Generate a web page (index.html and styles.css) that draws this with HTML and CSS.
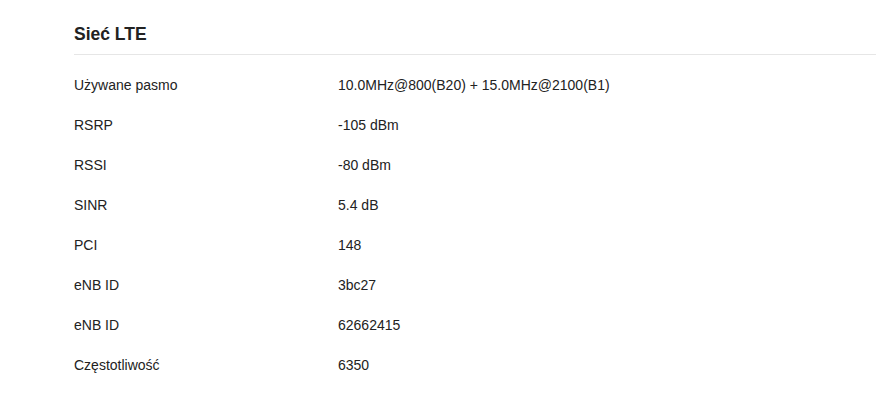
FILE: index.html
```html
<!DOCTYPE html>
<html lang="pl">
<head>
<meta charset="UTF-8">
<meta name="viewport" content="width=device-width, initial-scale=1.0">
<title>Sieć LTE</title>
<link rel="stylesheet" href="styles.css">
</head>
<body>

<div class="section">
    <h2 class="section-title">Sieć LTE</h2>
    <div class="info-list">
        <div class="info-row"><span class="info-label">Używane pasmo</span><span class="info-value">10.0MHz@800(B20) + 15.0MHz@2100(B1)</span></div>
        <div class="info-row"><span class="info-label">RSRP</span><span class="info-value">-105 dBm</span></div>
        <div class="info-row"><span class="info-label">RSSI</span><span class="info-value">-80 dBm</span></div>
        <div class="info-row"><span class="info-label">SINR</span><span class="info-value">5.4 dB</span></div>
        <div class="info-row"><span class="info-label">PCI</span><span class="info-value">148</span></div>
        <div class="info-row"><span class="info-label">eNB ID</span><span class="info-value">3bc27</span></div>
        <div class="info-row"><span class="info-label">eNB ID</span><span class="info-value">62662415</span></div>
        <div class="info-row"><span class="info-label">Częstotliwość</span><span class="info-value">6350</span></div>
    </div>
</div>

</body>
</html>
```

FILE: styles.css
```css
body {
    margin: 0;
    background-color: #ffffff;
    color: #222222;
    font-family: "Liberation Sans", Arial, Helvetica, sans-serif;
}

.section {
    padding: 20px 0 0 74px;
}

.section-title {
    margin: 0;
    font-size: 17.5px;
    font-weight: bold;
    line-height: 28px;
    padding-bottom: 6px;
    border-bottom: 1px solid #e6e6e6;
}

.info-list {
    padding-top: 10px;
}

.info-row {
    display: flex;
    align-items: center;
    height: 40px;
    font-size: 14px;
}

.info-label {
    width: 264px;
}
```
